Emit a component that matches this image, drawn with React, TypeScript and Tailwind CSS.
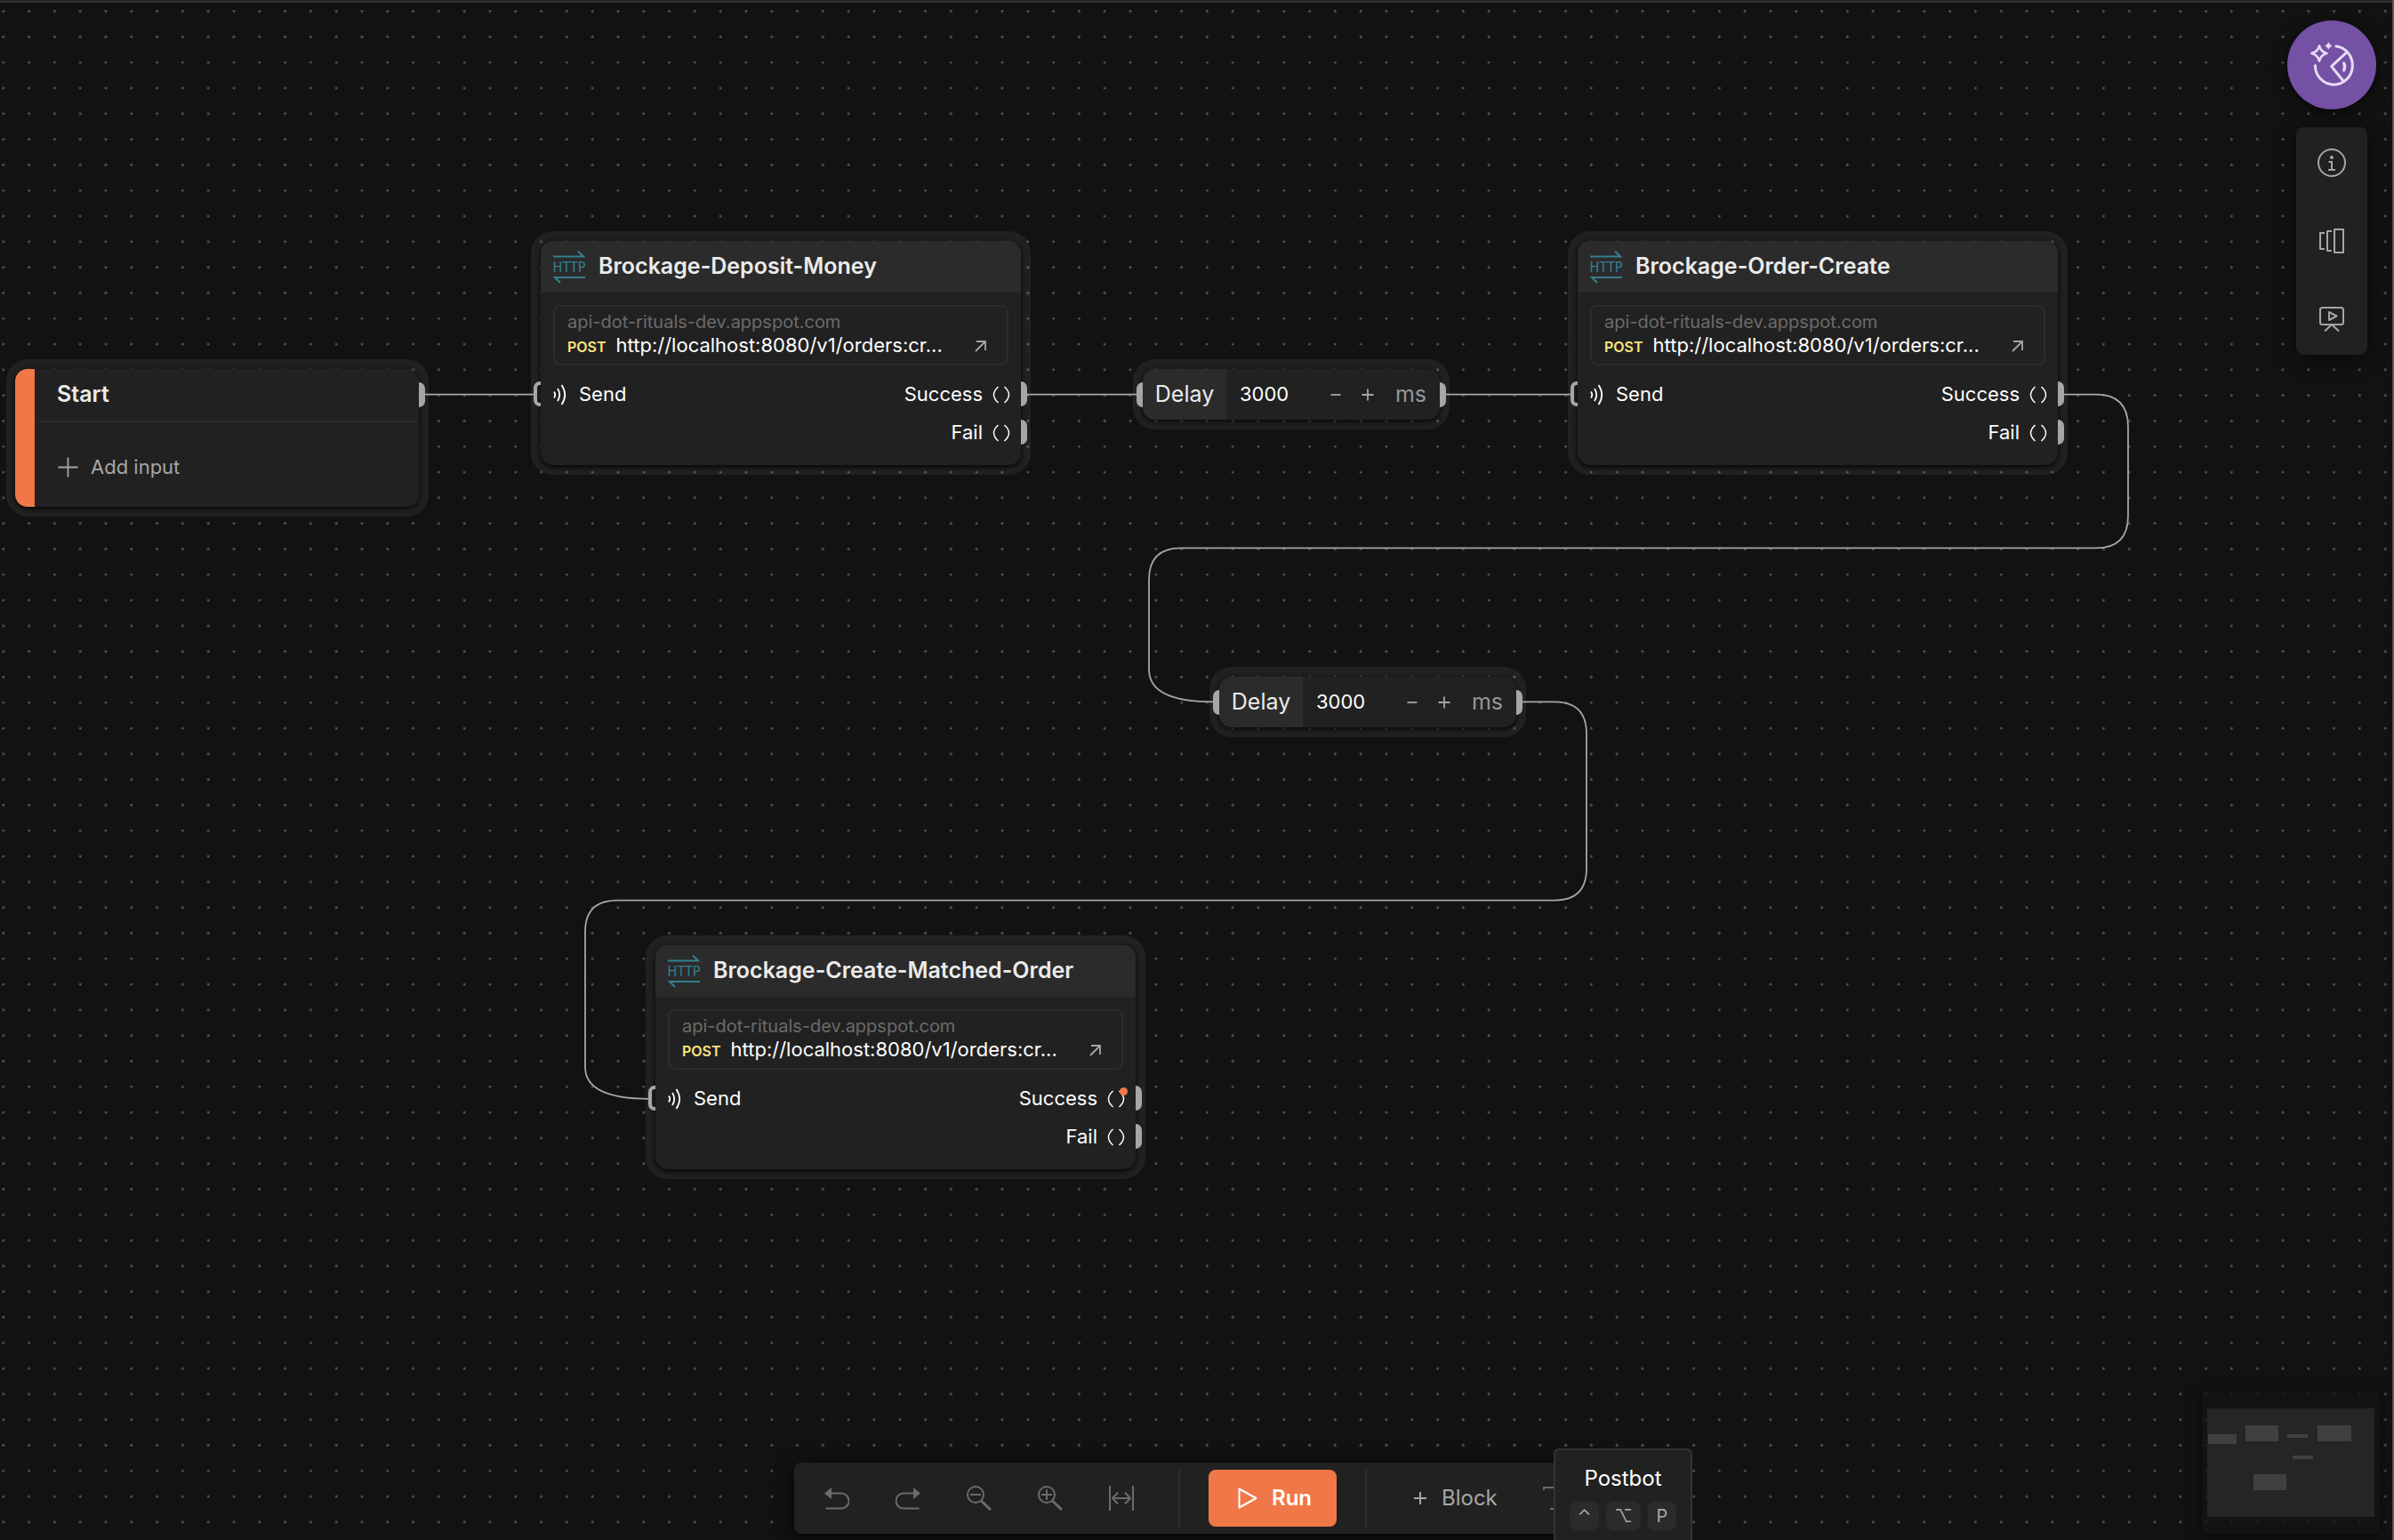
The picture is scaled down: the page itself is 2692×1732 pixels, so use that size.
import type { ReactNode } from "react";

function DotGrid() {
  return (
    <svg className="absolute inset-0 h-full w-full" aria-hidden="true">
      <defs>
        <pattern id="dots" x="-10.6" y="-1.7" width="144" height="144" viewBox="0 0 160 160" patternUnits="userSpaceOnUse">
          {[16, 48, 80, 112, 144].map((y) =>
            [16, 48, 80, 112, 144].map((x) => (
              <circle key={`${x}-${y}`} cx={x} cy={y} r="1.5" fill="#5e5e5e" />
            )),
          )}
        </pattern>
      </defs>
      <rect width="100%" height="100%" fill="url(#dots)" />
    </svg>
  );
}

function Connections() {
  return (
    <svg className="absolute inset-0 h-full w-full" fill="none" stroke="#a6a6a6" strokeWidth="1.8" aria-hidden="true">
      <path d="M478 443.6H600" />
      <path d="M1154 443.6H1278" />
      <path d="M1625 443.6H1767" />
      <path d="M2320 443.6H2357Q2393 443.6 2393 480V580Q2393 616.4 2357 616.4H1328Q1292 616.4 1292 652V753Q1292 789.3 1364 789.3" />
      <path d="M1711 789.3H1748Q1784 789.3 1784 825V977Q1784 1012.6 1748 1012.6H694Q658 1012.6 658 1048V1200Q658 1235.8 730 1235.8" />
    </svg>
  );
}

function HttpIcon() {
  return (
    <svg width="36" height="36" viewBox="0 0 36 36" className="shrink-0 overflow-visible" fill="none" stroke="#35808f" strokeWidth="2" aria-hidden="true">
      <path d="M0 6.5H34L28 0.5" />
      <path d="M36 30H2L8 36" />
      <text x="18" y="24" textAnchor="middle" fill="#35808f" stroke="none" fontSize="16" fontFamily="'DejaVu Sans Condensed', 'Liberation Sans', sans-serif">
        HTTP
      </text>
    </svg>
  );
}

function SignalIcon() {
  return (
    <svg width="15" height="24" viewBox="0 0 15 24" fill="none" stroke="currentColor" strokeWidth="1.8" aria-hidden="true">
      <path d="M1 8.500Q3.500 12 1 15.500" />
      <path d="M5 5Q9.500 12 5 19" />
      <path d="M9.500 1Q17 12 9.500 23" />
    </svg>
  );
}

function BracesIcon() {
  return (
    <svg width="20" height="20" viewBox="0 0 20 20" fill="none" stroke="currentColor" strokeWidth="1.5" aria-hidden="true">
      <path d="M6.500 1Q-3.500 10 6.500 19" />
      <path d="M13.500 1Q23.500 10 13.500 19" />
    </svg>
  );
}

function Frame({ place, children }: { place: string; children: ReactNode }) {
  return <section className={`absolute bg-white/[0.065] p-[11px] ${place}`}>{children}</section>;
}

function OutPort({ place }: { place: string }) {
  return <span className={`absolute h-7 w-[7px] rounded-r-[7px] bg-[#a6a6a6] ${place}`} />;
}

function OutputRow({ label, changed }: { label: string; changed?: boolean }) {
  return (
    <div className="relative flex h-[43px] items-center justify-end gap-[11px] pr-3">
      {label}
      <span className="relative">
        <BracesIcon />
        {changed && <span className="absolute -top-[3px] -right-[3px] h-[9px] w-[9px] rounded-full bg-[#f07748]" />}
      </span>
      <OutPort place="-right-[7px] top-[7px]" />
    </div>
  );
}

function HttpNode({ place, title, changed }: { place: string; title: string; changed?: boolean }) {
  return (
    <Frame place={`w-[562px] rounded-[25px] ${place}`}>
      <div className="rounded-[14px] bg-[#212121] pb-[15px] text-[22px] shadow-[0_2px_6px_rgba(0,0,0,0.9)]">
        <header className="flex h-[58px] items-center gap-[15px] rounded-t-[14px] bg-[#2b2b2b] px-[14px]">
          <HttpIcon />
          <h2 className="text-[25px] font-semibold text-[#ebebeb]">{title}</h2>
        </header>
        <div className="mx-[14px] mt-[14px] h-17 rounded-lg border-2 border-[#2c2c2c] px-[14px] py-1 leading-[26px]">
          <p className="text-[20px] leading-[26px] text-[#6b6b6b]">api-dot-rituals-dev.appspot.com</p>
          <div className="flex items-baseline gap-[11px]">
            <span className="text-[16px] font-semibold text-[#ffe47e]">POST</span>
            <span className="text-white">http://localhost:8080/v1/orders:cr...</span>
            <a href="#request" aria-label="Open request" className="mr-[9px] ml-auto text-[#a6a6a6]">
              <svg width="13" height="13" viewBox="0 0 13 13" fill="none" stroke="currentColor" strokeWidth="1.8" aria-hidden="true">
                <path d="M1 12L12 1M2 1H12V11" />
              </svg>
            </a>
          </div>
        </div>
        <div className="mt-[11px] flex justify-between text-white">
          <div className="relative flex h-[43px] items-center gap-[14px] pl-[14px]">
            <span className="absolute top-[7px] -left-2 h-7 w-2 rounded-l-[7px] border-4 border-r-0 border-[#a6a6a6]" />
            <SignalIcon />
            Send
          </div>
          <div>
            <OutputRow label="Success" changed={changed} />
            <OutputRow label="Fail" />
          </div>
        </div>
      </div>
    </Frame>
  );
}

function DelayNode({ place, id }: { place: string; id: string }) {
  return (
    <Frame place={`w-[356px] rounded-[25px] ${place}`}>
      <div className="relative flex h-[57px] items-center rounded-[14px] bg-[#212121] shadow-[0_2px_6px_rgba(0,0,0,0.9)]">
        <span className="absolute top-[15px] -left-[7px] h-7 w-[7px] rounded-l-[7px] bg-[#a6a6a6]" />
        <label htmlFor={id} className="flex h-full w-[94px] items-center justify-center rounded-l-[14px] bg-[#2b2b2b] text-[25px] text-[#ebebeb]">
          Delay
        </label>
        <input id={id} defaultValue="3000" className="ml-[15px] w-[90px] bg-transparent text-[22px] text-white outline-none" />
        <button aria-label="Decrease" className="flex h-9 w-9 items-center justify-center text-[#a6a6a6]">
          <svg width="14" height="14" viewBox="0 0 14 14" stroke="currentColor" strokeWidth="1.8" aria-hidden="true">
            <path d="M1.500 7H12.500" />
          </svg>
        </button>
        <button aria-label="Increase" className="flex h-9 w-9 items-center justify-center text-[#a6a6a6]">
          <svg width="14" height="14" viewBox="0 0 14 14" stroke="currentColor" strokeWidth="1.8" aria-hidden="true">
            <path d="M0.500 7H13.500M7 0.500V13.500" />
          </svg>
        </button>
        <span className="mr-[15px] ml-auto text-[25px] text-[#969696]">ms</span>
        <OutPort place="-right-[7px] top-[15px]" />
      </div>
    </Frame>
  );
}

function StartNode() {
  return (
    <Frame place="top-[404px] left-[7px] w-[475px] rounded-[25px] pl-[10px]">
      <div className="relative flex rounded-[14px] bg-[#212121] shadow-[0_2px_6px_rgba(0,0,0,0.9)]">
        <div className="w-[22px] rounded-l-[14px] bg-[#f07748]" />
        <div className="flex-1 px-[2px]">
          <h2 className="flex h-[58px] items-center pl-[23px] text-[25px] font-semibold text-[#ebebeb]">Start</h2>
          <div className="h-[97px] rounded-t-[4px] border-t-2 border-[#2c2c2c] pt-[35px] pl-6">
            <button className="flex items-center gap-[14px] text-[22px] leading-[30px] text-[#a6a6a6]">
              <svg width="23" height="23" viewBox="0 0 23 23" stroke="currentColor" strokeWidth="1.8" aria-hidden="true">
                <path d="M0.500 11.500H22.500M11.500 0.500V22.500" />
              </svg>
              Add input
            </button>
          </div>
        </div>
        <OutPort place="-right-[7px] top-[15px]" />
      </div>
    </Frame>
  );
}

function SideTools() {
  const button = "flex h-20 w-20 items-center justify-center";
  return (
    <aside className="absolute top-[23px] right-[18px] flex flex-col items-center gap-5">
      <button aria-label="Postbot" className="flex h-[100px] w-[100px] items-center justify-center rounded-full bg-[#7451a5] shadow-[0_4px_16px_rgba(0,0,0,0.6)]">
        <svg width="52" height="52" viewBox="168 138 156 156" fill="none" stroke="#e6dcf4" strokeWidth="9" strokeLinecap="round" strokeLinejoin="round" aria-hidden="true">
          <path d="M190 218A63 65 0 1 0 261 153" />
          <path d="M297 173L245 221L285 270" />
          <path d="M287 211Q293 223 287 234" strokeWidth="10" />
          <path d="M204 152Q209 172 229 177Q209 182 204 203Q199 182 178 177Q199 172 204 152Z" strokeWidth="8" />
          <path d="M235 142Q237 150 244 152Q237 154 235 161Q233 154 226 152Q233 150 235 142Z" strokeWidth="4" fill="#e6dcf4" />
        </svg>
      </button>
      <div className="flex flex-col gap-2 rounded-lg bg-[#212121] text-[#a6a6a6] shadow-[0_4px_20px_rgba(0,0,0,0.5)]">
        <button aria-label="Info" className={button}>
          <svg width="32" height="32" viewBox="0 0 32 32" fill="none" stroke="currentColor" strokeWidth="2" aria-hidden="true">
            <circle cx="16" cy="16" r="15" />
            <circle cx="16" cy="10" r="2" fill="currentColor" stroke="none" />
            <path d="M12.500 15H16V23.500M12 24H20" />
          </svg>
        </button>
        <button aria-label="Variables" className={button}>
          <svg width="28" height="28" viewBox="0 0 28 28" fill="none" stroke="currentColor" strokeWidth="2" strokeLinejoin="round" aria-hidden="true">
            <path d="M6 5H1V23H6M14 3H9V25H14" />
            <rect x="17" y="1" width="10" height="26" />
          </svg>
        </button>
        <button aria-label="Presentation" className={button}>
          <svg width="28" height="28" viewBox="0 0 28 28" fill="none" stroke="currentColor" strokeWidth="2" strokeLinejoin="round" aria-hidden="true">
            <rect x="1" y="1" width="26" height="19" rx="2.500" />
            <path d="M11 6V15L19.500 10.500ZM14 20L6 27.500M14 20L22 27.500" />
          </svg>
        </button>
      </div>
    </aside>
  );
}

function ToolButton({ label, children }: { label: string; children: ReactNode }) {
  return (
    <button aria-label={label} className="flex h-16 w-20 items-center justify-center text-[#6b6b6b]">
      <svg width="28" height="28" viewBox="0 0 28 28" fill="none" stroke="currentColor" strokeWidth="2" aria-hidden="true">
        {children}
      </svg>
    </button>
  );
}

function Toolbar() {
  return (
    <nav className="absolute bottom-[7px] left-1/2 flex h-20 w-[904px] -translate-x-1/2 items-center rounded-lg bg-[#212121] pl-2 text-[24px] shadow-[0_4px_20px_rgba(0,0,0,0.8)]">
      <ToolButton label="Undo">
        <path d="M7 8.500H19A8.500 8.500 0 0 1 19 25.500H1.500" />
        <path d="M0 8.500L8 2V15Z" fill="currentColor" stroke="none" />
      </ToolButton>
      <ToolButton label="Redo">
        <path d="M21 8.500H9A8.500 8.500 0 0 0 9 25.500H26.500" />
        <path d="M28 8.500L20 2V15Z" fill="currentColor" stroke="none" />
      </ToolButton>
      <ToolButton label="Zoom out">
        <circle cx="10" cy="10" r="9" />
        <path d="M4 10H16" />
        <path d="M16.500 17L27 27" strokeWidth="3" />
      </ToolButton>
      <ToolButton label="Zoom in">
        <circle cx="10" cy="10" r="9" />
        <path d="M4 10H16M10 4V16" />
        <path d="M16.500 17L27 27" strokeWidth="3" />
      </ToolButton>
      <ToolButton label="Fit to width">
        <path d="M1 0V28M27 0V28M4 14H24M10 7.500L4 14L10 20.500M18 7.500L24 14L18 20.500" />
      </ToolButton>
      <span className="ml-6 h-16 w-[2px] bg-[#303030]" />
      <button className="mx-8 flex h-16 w-36 items-center gap-4 rounded-lg bg-[#f07748] pl-[33px] font-semibold text-white">
        <svg width="22" height="24" viewBox="0 0 22 24" fill="none" stroke="currentColor" strokeWidth="2" strokeLinejoin="round" aria-hidden="true">
          <path d="M1.500 1.500V22.500L20.500 12Z" />
        </svg>
        Run
      </button>
      <span className="h-16 w-[2px] bg-[#303030]" />
      <button className="ml-[52px] flex items-center gap-4 text-[#a6a6a6]">
        <svg width="16" height="16" viewBox="0 0 16 16" stroke="currentColor" strokeWidth="2" aria-hidden="true">
          <path d="M1 8H15M8 1V15" />
        </svg>
        Block
      </button>
      <button aria-label="Text" className="ml-[51px] text-[#6b6b6b]">
        <svg width="26" height="28" viewBox="0 0 26 28" fill="none" stroke="currentColor" strokeWidth="2" aria-hidden="true">
          <path d="M1 5V2H25V5M13 2V26M8 26H18" />
        </svg>
      </button>
    </nav>
  );
}

function PostbotTip() {
  return (
    <div role="tooltip" className="absolute bottom-0 left-1/2 ml-[402px] flex h-[103px] w-[156px] flex-col items-center rounded-t-md border-2 border-b-0 border-[#333333] bg-[#212121] pt-4">
      <span className="text-[24px] leading-8 text-white">Postbot</span>
      <div className="mt-[10px] flex gap-2 text-[20px] text-[#a6a6a6]">
        <kbd className="flex h-8 w-[33px] items-center justify-center rounded-lg bg-[#2b2b2b] font-[Inter]">⌃</kbd>
        <kbd className="flex h-8 w-[39px] items-center justify-center rounded-lg bg-[#2b2b2b] font-[Inter]">⌥</kbd>
        <kbd className="flex h-8 w-8 items-center justify-center rounded-lg bg-[#2b2b2b] font-[Inter]">P</kbd>
      </div>
    </div>
  );
}

function Minimap() {
  return (
    <div className="absolute right-[14px] bottom-[7px] rounded-md bg-[#141414]/80 px-[6px] pt-[19px] pb-[19px] shadow-[0_2px_14px_rgba(0,0,0,0.6)]">
      <svg width="188" height="122" viewBox="0 0 188 122" aria-hidden="true">
        <rect width="188" height="122" fill="#262626" fillOpacity="0.95" />
        <g fill="#404040">
          <rect x="1" y="29" width="32" height="11" />
          <rect x="43" y="19" width="37" height="18" />
          <rect x="90" y="29" width="23" height="4" />
          <rect x="124" y="19" width="38" height="18" />
          <rect x="96" y="53" width="23" height="4" />
          <rect x="52" y="74" width="37" height="18" />
        </g>
      </svg>
    </div>
  );
}

export default function App() {
  return (
    <main className="relative h-screen w-full overflow-hidden border-r-2 border-[#575757] bg-[#121212] font-[Inter,sans-serif]">
      <DotGrid />
      <div className="absolute inset-x-0 top-0 h-[3px] border-t border-[#222222] bg-[#333333]" />
      <StartNode />
      <HttpNode place="top-[260px] left-[597px]" title="Brockage-Deposit-Money" />
      <DelayNode place="top-[404px] left-[1274px]" id="delay-1" />
      <HttpNode place="top-[260px] left-[1763px]" title="Brockage-Order-Create" />
      <DelayNode place="top-[750px] left-[1360px]" id="delay-2" />
      <HttpNode place="top-[1052px] left-[726px]" title="Brockage-Create-Matched-Order" changed />
      <Connections />
      <SideTools />
      <Minimap />
      <Toolbar />
      <PostbotTip />
    </main>
  );
}
